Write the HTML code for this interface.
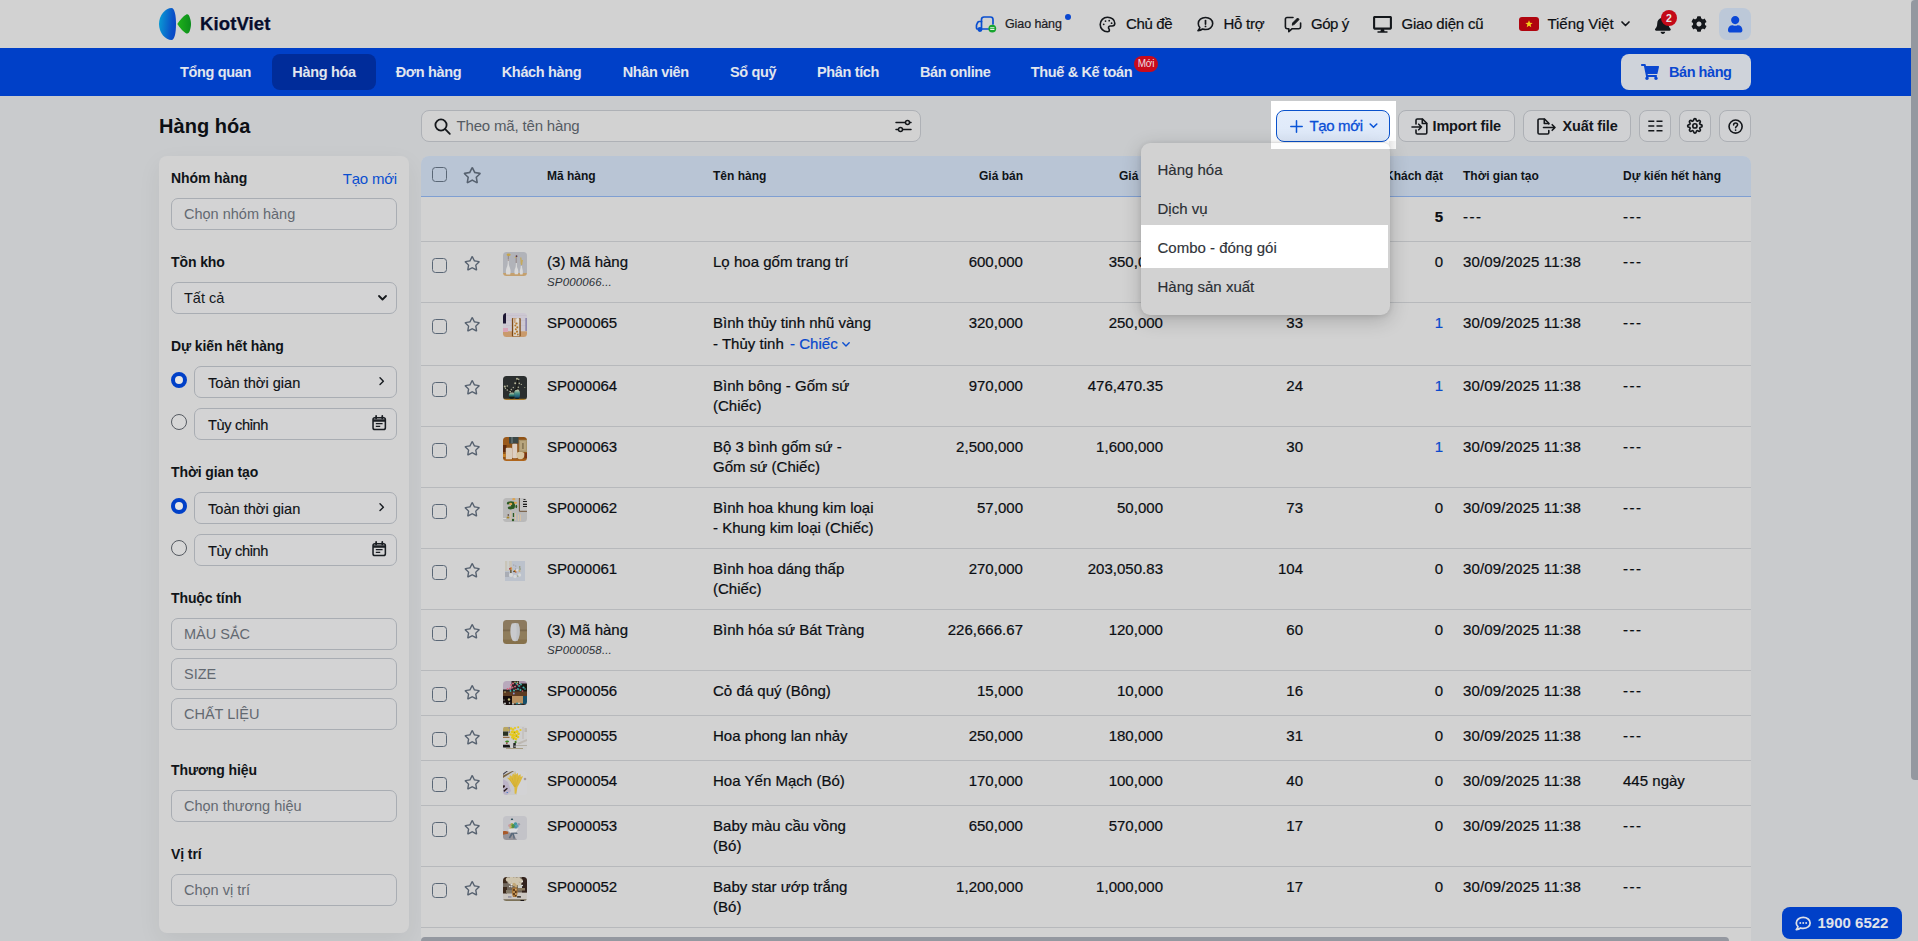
<!DOCTYPE html>
<html lang="vi">
<head>
<meta charset="utf-8">
<title>KiotViet - Hàng hóa</title>
<style>
*{box-sizing:border-box;margin:0;padding:0}
html,body{width:1918px;height:941px;overflow:hidden}
body{font-family:"Liberation Sans",sans-serif;font-size:15px;color:#101418;background:#c9cbcd;position:relative}
.a{position:absolute}
svg{display:block;overflow:visible}
#hdr{position:absolute;left:0;top:0;width:1911px;height:48px;background:#d2d2d2}
#nav{position:absolute;left:0;top:48px;width:1911px;height:48px;background:#0040c8}
#vscroll{position:absolute;left:1911px;top:0;width:7px;height:780px;background:#9498a0;border-radius:4px 0 0 4px}
.logo-t{position:absolute;left:200px;top:11px;font-weight:700;font-size:18.500px;line-height:26px;color:#070d2c;letter-spacing:.12px;-webkit-text-stroke:.25px #070d2c}
.hi{position:absolute;top:0;height:48px;line-height:48px;font-size:15px;color:#0d1014;-webkit-text-stroke:.2px;white-space:nowrap;letter-spacing:-0.2px}
.ni{position:absolute;top:54px;height:36px;line-height:36px;text-align:center;border-radius:8px;color:#e2e6ee;font-weight:700;font-size:14.5px;white-space:nowrap;letter-spacing:-0.35px}
.ni.act{background:#002c9a}
.btn{position:absolute;top:110px;height:32px;border:1px solid #adb0b5;border-radius:8px;background:#d0d1d3}
.btn span{position:absolute;top:0;line-height:30px;font-weight:700;font-size:14.5px;letter-spacing:-0.15px;white-space:nowrap;color:#14171b}
/* sidebar */
#side{position:absolute;left:159px;top:156px;width:250px;height:777px;background:#d2d2d2;border-radius:8px;box-shadow:0 8px 24px rgba(0,0,0,.06)}
.sl{position:absolute;left:12px;font-weight:700;font-size:14px;line-height:20px;color:#101418;white-space:nowrap;letter-spacing:-0.1px}
.inp{position:absolute;left:12px;width:226px;height:32px;border:1px solid #a9adb3;border-radius:7px;font-size:14.5px;line-height:30px;padding-left:12px;color:#636971;white-space:nowrap;background:#d3d3d4}
.inp.v{color:#15181c}
.rad{position:absolute;left:12px;width:16px;height:16px;border-radius:50%;border:1px solid #555a61;background:#d6d6d6}
.rad.on{border:4.5px solid #0040c8;background:#e6e6e6}
.rb{position:absolute;left:35px;width:203px;height:32px;border:1px solid #a9adb3;border-radius:7px;font-size:14.600px;line-height:32.400px;padding-left:13px;color:#0f1216;-webkit-text-stroke:.15px;white-space:nowrap;background:#d3d3d4}
/* table */
#tbl{position:absolute;left:421px;top:156px;width:1330px;height:785px;background:#d2d2d2;border-radius:8px 8px 0 0;overflow:hidden}
#th{position:absolute;left:0;top:0;width:1330px;height:41px;background:#b9c5d5;border-bottom:1px solid #7f9fd2}
.h{position:absolute;top:0;line-height:40px;font-weight:700;font-size:12px;color:#101418;white-space:nowrap}
.row{position:absolute;left:0;width:1330px;border-top:1px solid #b7b9bc}
.c{position:absolute;top:10px;line-height:20px;font-size:15px;color:#0b0e12;white-space:nowrap;-webkit-text-stroke:.22px #0b0e12;letter-spacing:.02px}
.r{text-align:right}
.cb{position:absolute;left:10.500px;width:15px;height:15px;border:1.500px solid #5a6776;border-radius:3.500px;background:transparent}
.th{position:absolute;left:82px;top:10px;width:24px;height:24px;border-radius:3.500px;overflow:hidden}
.sub{position:absolute;left:126px;top:33px;font-size:11.5px;line-height:14px;font-style:italic;color:#2c3136;letter-spacing:.15px}
.lnk{color:#0a49cc;-webkit-text-stroke-color:#0a49cc}
/* dropdown */
#dd{position:absolute;left:1140.500px;top:143px;width:249px;height:172px;border-radius:9px;background:#d2d2d2;box-shadow:0 5px 20px rgba(0,0,0,.20),0 1px 5px rgba(0,0,0,.10)}
.di{position:absolute;left:0;width:249px;height:39px;line-height:39px;padding-left:17px;font-size:15px;-webkit-text-stroke:.15px;color:#2a2e33;white-space:nowrap}
</style>
</head>
<body>
<svg width="0" height="0" style="position:absolute"><defs><filter id="tb" x="-5%" y="-5%" width="110%" height="110%"><feGaussianBlur stdDeviation=".38"/></filter></defs></svg>
<div id="hdr"></div>
<div id="nav"></div>
<div id="vscroll"></div>
<svg class="a" style="left:158px;top:7px" width="36" height="34" viewBox="0 0 36 34">
<defs><linearGradient id="lg1" x1="0" y1=".4" x2="1" y2=".6"><stop offset="0" stop-color="#0a9ad4"/><stop offset=".75" stop-color="#0a52c8"/><stop offset="1" stop-color="#0a46c4"/></linearGradient>
<linearGradient id="lg2" x1="0" y1=".5" x2="1" y2=".5"><stop offset="0" stop-color="#1fb31a"/><stop offset="1" stop-color="#0c8c1c"/></linearGradient></defs>
<path fill="url(#lg1)" d="M13.500 1 C16.500 1 18 8 18 17 C18 26 16.500 33 13.500 33 C7.500 33 1 26 1 17 C1 8 7.500 1 13.500 1Z"/>
<path fill="url(#lg2)" d="M19.300 17 C21.500 13.800 25.500 8.800 28.300 7.500 C30 6.800 31 8 31.800 10.500 C32.800 13.500 33 15.500 33 17 C33 18.800 32.700 21 31.800 23.800 C31 26.200 30 27 28.300 26.400 C25.500 25.200 21.500 20.200 19.300 17Z"/>
</svg>
<div class="logo-t">KiotViet</div>
<svg class="a" style="left:975px;top:15px" width="22" height="18" viewBox="0 0 22 18" fill="none" stroke="#0a4fd0" stroke-width="1.700" stroke-linecap="round" stroke-linejoin="round">
<path d="M6.500 13.500V4.500C6.500 3 7.500 2 9 2h6.500C17 2 18 3 18 4.500V9"/><path d="M6.500 6.500H4.200C3.500 6.500 3 6.900 2.700 7.500L1.500 10v3c0 .6.400 1 1 1h1"/><path d="M7.500 14h6"/>
<circle cx="5" cy="14.500" r="1.600" fill="#0a4fd0"/>
<circle cx="17.300" cy="13.600" r="3.900" fill="#16a52e" stroke="none"/><path d="M15.600 12.800h3.400M15.600 14.500h3.400" stroke="#e8f4ea" stroke-width="1.100"/>
</svg>
<div class="hi" style="left:1005px;font-size:12.5px;letter-spacing:-0.1px;color:#1c2024">Giao hàng</div>
<div class="a" style="left:1065px;top:14px;width:6px;height:6px;border-radius:50%;background:#0a47d0"></div>
<svg class="a" style="left:1099px;top:16px" width="17" height="17" viewBox="0 0 17 17" fill="none" stroke="#14171b" stroke-width="1.600" stroke-linecap="round" stroke-linejoin="round">
<path d="M8.500 1.200C4.400 1.200 1.200 4.400 1.200 8.500s3.200 7.300 7.300 7.300c1.300 0 1.900-.8 1.900-1.700 0-.5-.2-.9-.5-1.300-.3-.3-.4-.7-.4-1.100 0-1 .8-1.700 1.700-1.700h1.900c1.500 0 2.700-1.200 2.700-2.700 0-3.500-3.300-6.100-7.300-6.100z"/>
<circle cx="4.700" cy="8.300" r=".9" fill="#14171b" stroke="none"/><circle cx="6.500" cy="5.100" r=".9" fill="#14171b" stroke="none"/><circle cx="10.200" cy="4.700" r=".9" fill="#14171b" stroke="none"/><circle cx="12.600" cy="7.200" r=".9" fill="#14171b" stroke="none"/>
</svg>
<div class="hi" style="left:1126px;letter-spacing:-0.35px">Chủ đề</div>
<svg class="a" style="left:1196px;top:16px" width="18" height="17" viewBox="0 0 18 17" fill="none" stroke="#14171b" stroke-width="1.600" stroke-linecap="round" stroke-linejoin="round">
<path d="M9.500 1.500c4 0 7.200 2.600 7.200 6s-3.200 6-7.200 6c-1 0-2-.2-2.900-.5-1.200.9-2.700 1.600-4.600 1.700 1-.9 1.600-2 1.800-3.200C2.900 10.500 2.300 9.100 2.300 7.500c0-3.400 3.200-6 7.200-6z"/>
<path d="M9.500 4.600v3.500" stroke-width="1.700"/><circle cx="9.500" cy="10.400" r=".95" fill="#14171b" stroke="none"/>
</svg>
<div class="hi" style="left:1223.5px;letter-spacing:-0.25px">Hỗ trợ</div>
<svg class="a" style="left:1284px;top:16px" width="18" height="17" viewBox="0 0 18 17" fill="none" stroke="#14171b" stroke-width="1.600" stroke-linecap="round" stroke-linejoin="round">
<path d="M9 1.500H3c-.9 0-1.600.7-1.600 1.600v8c0 .9.700 1.600 1.600 1.600h1.800v3l3.400-3H15c.9 0 1.600-.7 1.600-1.600V7"/>
<path d="M8.300 8.800l.5-2 4.800-4.800 1.500 1.500-4.800 4.800z" fill="#14171b" stroke-width="1"/>
</svg>
<div class="hi" style="left:1311px;letter-spacing:-0.45px">Góp ý</div>
<svg class="a" style="left:1373px;top:16px" width="19" height="16.800" viewBox="0 0 576 512"><path fill="#14171b" d="M528 0H48C21.500 0 0 21.500 0 48v320c0 26.500 21.500 48 48 48h192l-16 48h-72c-13.300 0-24 10.700-24 24s10.700 24 24 24h272c13.300 0 24-10.700 24-24s-10.700-24-24-24h-72l-16-48h192c26.500 0 48-21.500 48-48V48c0-26.500-21.500-48-48-48zm-16 352H64V64h448v288z"/></svg>
<div class="hi" style="left:1401.5px;letter-spacing:-0.2px">Giao diện cũ</div>
<svg class="a" style="left:1519px;top:17px" width="20" height="14" viewBox="0 0 20 14"><rect width="20" height="14" rx="3" fill="#b0050f"/><path fill="#f2d21b" d="M10 3.200l1 2.500 2.700.2-2.100 1.700.7 2.600L10 8.800 7.700 10.200l.7-2.600L6.300 5.900 9 5.700z"/></svg>
<div class="hi" style="left:1547.5px;letter-spacing:-0.05px">Tiếng Việt</div>
<svg class="a" style="left:1620.500px;top:20.500px" width="9" height="6" viewBox="0 0 9 6" fill="none" stroke="#14171b" stroke-width="1.700" stroke-linecap="round" stroke-linejoin="round"><path d="M1 1l3.500 3.500L8 1"/></svg>
<svg class="a" style="left:1654.500px;top:15.500px" width="15.750" height="18" viewBox="0 0 448 512"><path fill="#14171b" d="M224 512c35.320 0 63.970-28.650 63.970-64H160.030c0 35.350 28.650 64 63.970 64zm215.390-149.710c-19.320-20.760-55.470-51.990-55.470-154.290 0-77.700-54.480-139.900-127.940-155.160V32c0-17.670-14.320-32-31.980-32s-31.980 14.330-31.980 32v20.840C118.560 68.100 64.080 130.300 64.080 208c0 102.300-36.150 133.530-55.470 154.290-6 6.450-8.660 14.160-8.610 21.710.110 16.400 12.980 32 32.100 32h383.800c19.120 0 32-15.600 32.100-32 .050-7.550-2.610-15.270-8.610-21.710z"/></svg>
<div class="a" style="left:1661px;top:9.500px;width:16px;height:16px;border-radius:50%;background:#c40a18;color:#e8e8e8;font-size:10.500px;font-weight:700;line-height:16px;text-align:center">2</div>
<svg class="a" style="left:1691px;top:16px" width="16" height="16" viewBox="0 0 512 512"><path fill="#14171b" d="M487.4 315.7l-42.6-24.6c4.3-23.2 4.3-47 0-70.2l42.6-24.6c4.9-2.8 7.1-8.6 5.5-14-11.1-35.6-30-67.8-54.7-94.6-3.8-4.1-10-5.1-14.8-2.3L380.8 110c-17.9-15.4-38.5-27.3-60.8-35.1V25.800c0-5.600-3.900-10.500-9.400-11.700-36.700-8.200-74.300-7.800-109.200 0-5.500 1.200-9.400 6.100-9.400 11.700V75c-22.200 7.900-42.800 19.800-60.800 35.100L88.700 85.500c-4.900-2.800-11-1.900-14.800 2.300-24.700 26.700-43.600 58.900-54.700 94.600-1.700 5.400.600 11.200 5.500 14L67.300 221c-4.300 23.200-4.300 47 0 70.200l-42.600 24.600c-4.900 2.800-7.100 8.600-5.500 14 11.100 35.600 30 67.800 54.700 94.600 3.800 4.100 10 5.100 14.800 2.300l42.600-24.600c17.900 15.400 38.500 27.300 60.800 35.100v49.200c0 5.600 3.900 10.500 9.400 11.700 36.700 8.200 74.300 7.800 109.200 0 5.500-1.200 9.400-6.100 9.400-11.700v-49.200c22.200-7.900 42.800-19.800 60.800-35.100l42.600 24.600c4.900 2.800 11 1.900 14.800-2.300 24.700-26.700 43.600-58.900 54.700-94.600 1.500-5.500-.700-11.300-5.600-14.100zM256 336c-44.100 0-80-35.900-80-80s35.900-80 80-80 80 35.900 80 80-35.900 80-80 80z"/></svg>
<div class="a" style="left:1719px;top:8px;width:32px;height:32px;border-radius:8px;background:#bcc8d8"></div><svg class="a" style="left:1727.800px;top:15.700px" width="14.400" height="16.400" viewBox="0 0 448 512"><path fill="#0a47d6" d="M224 256c70.700 0 128-57.300 128-128S294.700 0 224 0 96 57.300 96 128s57.300 128 128 128zm89.600 32h-16.700c-22.200 10.200-46.900 16-72.900 16s-50.600-5.800-72.900-16h-16.700C60.200 288 0 348.200 0 422.400V464c0 26.500 21.500 48 48 48h352c26.500 0 48-21.500 48-48v-41.600c0-74.200-60.200-134.400-134.400-134.400z"/></svg>
<div class="ni" style="left:159.5px;width:112px">Tổng quan</div>
<div class="ni act" style="left:272px;width:104px">Hàng hóa</div>
<div class="ni" style="left:376px;width:105px">Đơn hàng</div>
<div class="ni" style="left:481px;width:121px">Khách hàng</div>
<div class="ni" style="left:601.5px;width:108.5px">Nhân viên</div>
<div class="ni" style="left:709px;width:88px">Sổ quỹ</div>
<div class="ni" style="left:796px;width:104px">Phân tích</div>
<div class="ni" style="left:899.5px;width:111.5px">Bán online</div>
<div class="ni" style="left:1010px;width:143px">Thuế &amp; Kế toán</div>
<div class="a" style="left:1134px;top:55.500px;width:24px;height:16px;border-radius:8px;background:#c80a1c;color:#ecdfe0;font-size:10px;line-height:16px;text-align:center;letter-spacing:-0.2px">Mới</div>
<div class="a" style="left:1620.500px;top:54px;width:130.500px;height:36px;border-radius:8px;background:#cfd3da"></div><svg class="a" style="left:1641px;top:64px" width="18" height="16" viewBox="0 0 576 512"><path fill="#0a47d0" d="M528.120 301.319l47.273-208C578.806 78.301 567.391 64 551.990 64H159.208l-9.166-44.810C147.758 8.021 137.930 0 126.529 0H24C10.745 0 0 10.745 0 24v16c0 13.255 10.745 24 24 24h69.883l70.248 343.435C147.325 417.100 136 435.222 136 456c0 30.928 25.072 56 56 56s56-25.072 56-56c0-15.674-6.447-29.835-16.824-40h209.647C430.447 426.165 424 440.326 424 456c0 30.928 25.072 56 56 56s56-25.072 56-56c0-22.172-12.888-41.332-31.579-50.405l5.517-24.276c3.413-15.018-8.002-29.319-23.403-29.319H218.117l-6.545-32h293.145c11.206 0 20.920-7.754 23.403-18.681z"/></svg><div class="a" style="left:1669px;top:54px;line-height:36px;font-weight:700;font-size:14.500px;letter-spacing:-0.45px;color:#0a47d0;white-space:nowrap">Bán hàng</div>
<div class="a" style="left:159px;top:112px;font-weight:700;font-size:20px;line-height:28px;color:#0c0f13;white-space:nowrap;letter-spacing:0.05px">Hàng hóa</div>
<div class="a" style="left:421px;top:110px;width:500px;height:32px;border:1px solid #aeb1b6;border-radius:8px;background:#d2d2d2"></div>
<svg class="a" style="left:433.500px;top:117.500px" width="17" height="17" viewBox="0 0 17 17" fill="none" stroke="#14171b" stroke-width="1.800" stroke-linecap="round"><circle cx="7" cy="7" r="5.600"/><path d="M11.200 11.200L15.800 15.800"/></svg>
<div class="a" style="left:456.500px;top:110px;line-height:32px;font-size:15px;letter-spacing:-0.17px;color:#555b63;white-space:nowrap">Theo mã, tên hàng</div>
<svg class="a" style="left:894.500px;top:118px" width="17" height="16" viewBox="0 0 17 16" fill="none" stroke="#14171b" stroke-width="1.500" stroke-linecap="round"><path d="M1 4.500h9.500M14.500 4.500H16M1 11.500h2.500M7.500 11.500H16"/><circle cx="12.500" cy="4.500" r="2" fill="#d2d2d2"/><circle cx="5.500" cy="11.500" r="2" fill="#d2d2d2"/></svg>
<div class="btn" style="left:1398px;width:116.500px"><span style="left:33.500px">Import file</span></div>
<svg class="a" style="left:1410.500px;top:117.500px" width="17" height="17" viewBox="0 0 17 17" fill="none" stroke="#14171b" stroke-width="1.600" stroke-linecap="round" stroke-linejoin="round">
<path d="M5 6V2.300c0-.7.600-1.300 1.300-1.300h5.200L15.800 5.300v9.400c0 .7-.6 1.300-1.300 1.300H6.300c-.7 0-1.300-.6-1.300-1.300V12"/><path d="M11.300 1.200v4.300h4.300"/><path d="M1 9h9.500M7.700 6.200L10.500 9l-2.800 2.800"/></svg>
<div class="btn" style="left:1523px;width:107.500px"><span style="left:38.500px">Xuất file</span></div>
<svg class="a" style="left:1536.500px;top:117.500px" width="19" height="17" viewBox="0 0 19 17" fill="none" stroke="#14171b" stroke-width="1.600" stroke-linecap="round" stroke-linejoin="round">
<path d="M11.800 12.500v2.200c0 .7-.6 1.300-1.300 1.300H2.300c-.7 0-1.300-.6-1.300-1.300V2.300C1 1.600 1.600 1 2.300 1h5.200l4.300 4.300V6"/><path d="M7.300 1.200v4.300h4.300"/><path d="M6.500 9.500H18M15.200 6.700L18 9.500l-2.800 2.800"/></svg>
<div class="btn" style="left:1639px;width:32px"></div><div class="btn" style="left:1679px;width:32px"></div><div class="btn" style="left:1719px;width:32px"></div>
<svg class="a" style="left:1647.500px;top:120px" width="15" height="12" viewBox="0 0 15 12" fill="none" stroke="#14171b" stroke-width="1.500"><path d="M.3 1.200h6M8.500 1.200h6M.3 6h6M8.500 6h6M.3 10.800h6M8.500 10.800h6"/></svg>
<svg class="a" style="left:1687.200px;top:118px" width="15.800" height="15.800" viewBox="0 0 24 24" fill="none" stroke="#14171b" stroke-width="2.500" stroke-linecap="round" stroke-linejoin="round"><circle cx="12" cy="12" r="3.200"/><path d="M19.400 15a1.650 1.650 0 0 0 .33 1.820l.06.06a2 2 0 0 1 0 2.830 2 2 0 0 1-2.830 0l-.06-.06a1.650 1.650 0 0 0-1.820-.33 1.650 1.650 0 0 0-1 1.510V21a2 2 0 0 1-2 2 2 2 0 0 1-2-2v-.09A1.650 1.650 0 0 0 9 19.400a1.650 1.650 0 0 0-1.820.33l-.06.06a2 2 0 0 1-2.830 0 2 2 0 0 1 0-2.830l.06-.06a1.650 1.650 0 0 0 .33-1.820 1.650 1.650 0 0 0-1.510-1H3a2 2 0 0 1-2-2 2 2 0 0 1 2-2h.09A1.650 1.650 0 0 0 4.600 9a1.650 1.650 0 0 0-.33-1.820l-.06-.06a2 2 0 0 1 0-2.830 2 2 0 0 1 2.830 0l.06.06a1.650 1.650 0 0 0 1.820.33H9a1.650 1.650 0 0 0 1-1.510V3a2 2 0 0 1 2-2 2 2 0 0 1 2 2v.09a1.650 1.650 0 0 0 1 1.510 1.650 1.650 0 0 0 1.820-.33l.06-.06a2 2 0 0 1 2.830 0 2 2 0 0 1 0 2.830l-.06.06a1.650 1.650 0 0 0-.33 1.820V9a1.650 1.650 0 0 0 1.510 1H21a2 2 0 0 1 2 2 2 2 0 0 1-2 2h-.09a1.650 1.650 0 0 0-1.510 1z"/></svg>
<svg class="a" style="left:1727.500px;top:118.500px" width="15.200" height="15.200" viewBox="0 0 16 16" fill="none" stroke="#14171b" stroke-width="1.700" stroke-linecap="round" stroke-linejoin="round"><circle cx="8" cy="8" r="6.900"/><path d="M5.900 6.200c0-1.200 1-2 2.100-2s2.100.8 2.100 1.900c0 1.500-2.100 1.700-2.100 3.100" stroke-width="1.600"/><circle cx="8" cy="11.700" r=".9" fill="#14171b" stroke="none"/></svg>
<div id="side">
<div class="sl" style="top:12px">Nhóm hàng</div>
<div class="a" style="right:12px;top:13px;font-size:15px;line-height:20px;color:#0b4fd0;letter-spacing:-0.2px;white-space:nowrap">Tạo mới</div>
<div class="inp" style="top:42px">Chọn nhóm hàng</div>
<div class="sl" style="top:96px">Tồn kho</div>
<div class="inp v" style="top:126px">Tất cả</div>
<svg class="a" style="left:219px;top:138.500px" width="9" height="6" viewBox="0 0 9 6" fill="none" stroke="#14171b" stroke-width="1.800" stroke-linecap="round" stroke-linejoin="round"><path d="M1 1l3.500 3.500L8 1"/></svg>
<div class="sl" style="top:180px">Dự kiến hết hàng</div>
<div class="rad on" style="top:216px"></div><div class="rb" style="top:210px">Toàn thời gian</div>
<svg class="a" style="left:220.3px;top:221.2px" width="5.400" height="8.400" viewBox="0 0 6 10" fill="none" stroke="#1a1e23" stroke-width="1.700" stroke-linecap="round" stroke-linejoin="round"><path d="M1 1l4 4-4 4"/></svg>
<div class="rad" style="top:258px"></div><div class="rb" style="top:252px;letter-spacing:-.35px">Tùy chỉnh</div>
<svg class="a" style="left:212.8px;top:259.2px" width="14.400" height="15.600" viewBox="0 0 14 15" fill="none" stroke="#1a1e23" stroke-width="1.500" stroke-linejoin="round"><rect x="1" y="2.500" width="12" height="11.500" rx="1.800"/><path d="M1 5.300h12" stroke-width="2.400"/><path d="M4 .8v2.500M10 .8v2.500" stroke-linecap="round" stroke-width="1.700"/><path d="M3.700 8.300h6.600M3.700 11h4.300" stroke-width="1.300"/></svg>
<div class="sl" style="top:306px">Thời gian tạo</div>
<div class="rad on" style="top:342px"></div><div class="rb" style="top:336px">Toàn thời gian</div>
<svg class="a" style="left:220.3px;top:347.2px" width="5.400" height="8.400" viewBox="0 0 6 10" fill="none" stroke="#1a1e23" stroke-width="1.700" stroke-linecap="round" stroke-linejoin="round"><path d="M1 1l4 4-4 4"/></svg>
<div class="rad" style="top:384px"></div><div class="rb" style="top:378px;letter-spacing:-.35px">Tùy chỉnh</div>
<svg class="a" style="left:212.8px;top:385.2px" width="14.400" height="15.600" viewBox="0 0 14 15" fill="none" stroke="#1a1e23" stroke-width="1.500" stroke-linejoin="round"><rect x="1" y="2.500" width="12" height="11.500" rx="1.800"/><path d="M1 5.300h12" stroke-width="2.400"/><path d="M4 .8v2.500M10 .8v2.500" stroke-linecap="round" stroke-width="1.700"/><path d="M3.700 8.300h6.600M3.700 11h4.300" stroke-width="1.300"/></svg>
<div class="sl" style="top:432px">Thuộc tính</div>
<div class="inp" style="top:462px">MÀU SẮC</div>
<div class="inp" style="top:502px">SIZE</div>
<div class="inp" style="top:542px">CHẤT LIỆU</div>
<div class="sl" style="top:604px">Thương hiệu</div>
<div class="inp" style="top:634px">Chọn thương hiệu</div>
<div class="sl" style="top:688px">Vị trí</div>
<div class="inp" style="top:718px">Chọn vị trí</div>
</div>
<div id="tbl">
<div id="th">
<div class="cb" style="top:10.500px"></div><svg class="a" style="left:42px;top:10.5px" width="18.5" height="16.44" viewBox="0 0 576 512"><path fill="#56616f" d="M528.100 171.500L382 150.200 316.700 17.800c-11.700-23.600-45.600-23.900-57.400 0L194 150.200 47.900 171.500c-26.200 3.800-36.700 36.100-17.700 54.600l105.700 103-25 145.500c-4.500 26.300 23.200 46 46.400 33.700L288 439.600l130.700 68.700c23.200 12.200 50.900-7.400 46.400-33.700l-25-145.500 105.700-103c19-18.500 8.500-50.800-17.700-54.600zM388.600 312.300l23.700 138.400L288 385.400l-124.300 65.300 23.700-138.400-100.600-98 139-20.200 62.200-126 62.200 126 139 20.200-100.600 98z"/></svg><div class="h" style="left:126px">Mã hàng</div><div class="h" style="left:292px">Tên hàng</div><div class="h" style="left:1042px">Thời gian tạo</div><div class="h" style="left:1202px">Dự kiến hết hàng</div><div class="h r" style="right:728px">Giá bán</div><div class="h r" style="right:588px">Giá vốn</div><div class="h r" style="right:448px">Tồn kho</div><div class="h r" style="right:308px">Khách đặt</div>
</div>
<div class="row" style="top:41px;height:44px;border-top:none"><div class="c r" style="right:448px;font-weight:700">445</div><div class="c r" style="right:308px;font-weight:700">5</div><div class="c" style="left:1042px;letter-spacing:1.500px">---</div><div class="c" style="left:1202px;letter-spacing:1.500px">---</div></div>
<div class="row" style="top:85px;height:61px"><div class="cb" style="top:15.500px"></div><svg class="a" style="left:42.8px;top:13.6px" width="16.4" height="14.58" viewBox="0 0 576 512"><path fill="#56616f" d="M528.100 171.500L382 150.200 316.700 17.800c-11.700-23.600-45.600-23.900-57.400 0L194 150.200 47.900 171.500c-26.200 3.800-36.700 36.100-17.700 54.600l105.700 103-25 145.500c-4.500 26.300 23.200 46 46.400 33.700L288 439.600l130.700 68.700c23.200 12.200 50.900-7.400 46.400-33.700l-25-145.500 105.700-103c19-18.500 8.500-50.800-17.700-54.600zM388.600 312.300l23.700 138.400L288 385.400l-124.300 65.300 23.700-138.400-100.600-98 139-20.200 62.200-126 62.200 126 139 20.200-100.600 98z"/></svg><svg class="th" viewBox="0 0 24 24" width="24" height="24"><g filter="url(#tb)"><rect width="24" height="24" fill="#b1b3b9"/><rect y="21" width="24" height="3" fill="#c4a06e"/><path fill="#d9d9d9" d="M3.300 22.600c-.9-3.200-.2-6.200.9-8.400.5-1.200.6-3.800.6-7.200h.9c0 3.400.1 6 .6 7.200 1.100 2.200 1.800 5.200.9 8.400zM11.800 22.300c-.8-2.600-.3-4.900.6-6.600.4-.9.500-2.400.5-4.700h.9c0 2.300.1 3.800.5 4.700.9 1.700 1.400 4 .6 6.600zM17.100 22.600c-.5-2-.3-4.600.3-6.200.3-.8.300-1.600.3-2.400h1.300c0 .8 0 1.600.3 2.400.6 1.600.8 4.200.3 6.200z"/><ellipse cx="5.600" cy="2.800" rx="2" ry="1.300" fill="#c5a448"/><path stroke="#7a5c54" stroke-width=".5" fill="none" d="M5.300 4v5M13.200 5v6"/><circle cx="13.500" cy="4.200" r=".9" fill="#5e3a44"/><circle cx="12.400" cy="5.400" r=".7" fill="#c9b060"/><path stroke="#c5a95c" stroke-width="1.200" fill="none" d="M17.600 5.500c.8 2 .2 3.500.8 7M19.500 8c-.6 1.500-.8 3-.9 5"/></g></svg><div class="c" style="left:126px">(3) Mã hàng</div><div class="sub">SP000066...</div><div class="c" style="left:292px;top:10px">Lọ hoa gốm trang trí</div><div class="c r" style="right:728px">600,000</div><div class="c r" style="right:588px">350,000</div><div class="c r" style="right:448px">11</div><div class="c r" style="right:308px">0</div><div class="c" style="left:1042px;letter-spacing:.14px">30/09/2025 11:38</div><div class="c" style="left:1202px;letter-spacing:1.500px">---</div></div>
<div class="row" style="top:146px;height:63px"><div class="cb" style="top:15.500px"></div><svg class="a" style="left:42.8px;top:13.6px" width="16.4" height="14.58" viewBox="0 0 576 512"><path fill="#56616f" d="M528.100 171.500L382 150.200 316.700 17.800c-11.700-23.600-45.600-23.900-57.400 0L194 150.200 47.900 171.500c-26.200 3.800-36.700 36.100-17.700 54.600l105.700 103-25 145.500c-4.500 26.300 23.200 46 46.400 33.700L288 439.600l130.700 68.700c23.200 12.200 50.900-7.400 46.400-33.700l-25-145.500 105.700-103c19-18.500 8.500-50.800-17.700-54.600zM388.600 312.300l23.700 138.400L288 385.400l-124.300 65.300 23.700-138.400-100.600-98 139-20.200 62.200-126 62.200 126 139 20.200-100.600 98z"/></svg><svg class="th" viewBox="0 0 24 24" width="24" height="24"><g filter="url(#tb)"><rect width="24" height="24" fill="#cdc8d2"/><rect x="0" y="0" width="3" height="10.500" fill="#1c1632"/><rect x="3" y="2" width="21" height=".4" fill="#bdb8c4"/><rect x="3" y="7" width="21" height=".4" fill="#bdb8c4"/><rect x="3" y="12" width="21" height=".4" fill="#bdb8c4"/><rect x="22.300" y="5" width="1.700" height="13" fill="#8d88ae"/><rect y="18.300" width="24" height="5.700" fill="#c99a6c"/><rect x="0" y="15" width="5" height="4" fill="#d9a4b8"/><rect x="8.900" y="5" width="8.800" height="18.600" rx=".8" fill="#7e4a14"/><rect x="10.200" y="5.200" width="6.200" height="18" fill="#ddd6cc"/><g fill="#b5772a"><circle cx="13.500" cy="10.500" r="1.100"/><circle cx="12.300" cy="12.400" r="1"/><circle cx="14.300" cy="14.300" r="1.100"/><circle cx="12.800" cy="16.300" r="1"/><circle cx="14" cy="18.700" r="1.100"/><circle cx="12" cy="20.500" r="1"/><circle cx="14.800" cy="21.500" r=".9"/></g><rect x="11.200" y="5" width="1.300" height="5" fill="#c9986a"/><rect x="14.300" y="5" width="1.200" height="4" fill="#e9e4dc"/></g></svg><div class="c" style="left:126px">SP000065</div><div class="c" style="left:292px;top:10px">Bình thủy tinh nhũ vàng</div><div class="c" style="left:292px;top:31px">- Thủy tinh <span class="lnk" style="margin-left:2px">- Chiếc</span></div><svg class="a" style="left:420.500px;top:38.500px" width="8" height="5" viewBox="0 0 8 5" fill="none" stroke="#0b4fd0" stroke-width="1.400" stroke-linecap="round" stroke-linejoin="round"><path d="M.8.800L4 4 7.200.8"/></svg><div class="c r" style="right:728px">320,000</div><div class="c r" style="right:588px">250,000</div><div class="c r" style="right:448px">33</div><div class="c r lnk" style="right:308px">1</div><div class="c" style="left:1042px;letter-spacing:.14px">30/09/2025 11:38</div><div class="c" style="left:1202px;letter-spacing:1.500px">---</div></div>
<div class="row" style="top:209px;height:61px"><div class="cb" style="top:15.500px"></div><svg class="a" style="left:42.8px;top:13.6px" width="16.4" height="14.58" viewBox="0 0 576 512"><path fill="#56616f" d="M528.100 171.500L382 150.200 316.700 17.800c-11.700-23.600-45.600-23.900-57.400 0L194 150.200 47.900 171.500c-26.200 3.800-36.700 36.100-17.700 54.600l105.700 103-25 145.500c-4.500 26.300 23.200 46 46.400 33.700L288 439.600l130.700 68.700c23.200 12.200 50.900-7.400 46.400-33.700l-25-145.500 105.700-103c19-18.500 8.500-50.800-17.700-54.600zM388.600 312.300l23.700 138.400L288 385.400l-124.300 65.300 23.700-138.400-100.600-98 139-20.200 62.200-126 62.200 126 139 20.200-100.600 98z"/></svg><svg class="th" viewBox="0 0 24 24" width="24" height="24"><g filter="url(#tb)"><rect width="24" height="24" fill="#2a2e2e"/><rect y="22.800" width="24" height="1.200" fill="#a87a2a"/><defs><linearGradient id="v3a" x1="0" y1="0" x2="0" y2="1"><stop offset="0" stop-color="#c9c9a8"/><stop offset=".45" stop-color="#2f8076"/><stop offset=".8" stop-color="#0c1c1c"/></linearGradient><linearGradient id="v3b" x1="0" y1="0" x2="0" y2="1"><stop offset="0" stop-color="#cfcfae"/><stop offset=".4" stop-color="#4a9488"/><stop offset=".75" stop-color="#1f5c78"/><stop offset="1" stop-color="#0a1418"/></linearGradient></defs><path fill="url(#v3a)" d="M7.500 16.400h2.600c1.400 1 1.900 2.300 1.500 4.200-.3 1.300-1 2-2 2.200H8c-1-.2-1.700-.9-2-2.200-.4-1.900.1-3.200 1.500-4.200z"/><path fill="url(#v3b)" d="M12.900 13.400h2.400c1.200.9 1.700 2.300 1.700 4.700s-.5 3.900-1.500 4.900h-2.800c-1-1-1.500-2.500-1.500-4.900s.5-3.800 1.700-4.700z"/><path stroke="#15140f" stroke-width=".9" fill="none" d="M13.800 13.300c0-3.500.3-6.500.8-9.500M8.800 16.300c-1.300-2.400-3.500-3.800-6.500-5M10 15.500c1-1.300 2.300-2 4-2.500"/><g fill="#b5b598"><circle cx="14" cy="2.800" r="1"/><circle cx="15.700" cy="3.200" r=".8"/><circle cx="12.200" cy="7.300" r="1"/><circle cx="16.300" cy="7.400" r=".8"/><circle cx="18.300" cy="8.400" r=".6"/><circle cx="1.800" cy="10.500" r="1"/><circle cx="4.300" cy="10" r=".8"/><circle cx="2.500" cy="12.300" r=".7"/><circle cx="4.300" cy="14" r=".8"/><circle cx="7.200" cy="15.500" r=".8"/><circle cx="10.300" cy="11.500" r=".7"/><circle cx="15.300" cy="11.300" r=".8"/><circle cx="8.300" cy="13.500" r=".7"/><circle cx="21.800" cy="11.400" r=".5"/></g></g></svg><div class="c" style="left:126px">SP000064</div><div class="c" style="left:292px;top:10px">Bình bông - Gốm sứ</div><div class="c" style="left:292px;top:30px">(Chiếc)</div><div class="c r" style="right:728px">970,000</div><div class="c r" style="right:588px">476,470.35</div><div class="c r" style="right:448px">24</div><div class="c r lnk" style="right:308px">1</div><div class="c" style="left:1042px;letter-spacing:.14px">30/09/2025 11:38</div><div class="c" style="left:1202px;letter-spacing:1.500px">---</div></div>
<div class="row" style="top:270px;height:61px"><div class="cb" style="top:15.500px"></div><svg class="a" style="left:42.8px;top:13.6px" width="16.4" height="14.58" viewBox="0 0 576 512"><path fill="#56616f" d="M528.100 171.500L382 150.200 316.700 17.800c-11.700-23.600-45.600-23.900-57.400 0L194 150.200 47.900 171.500c-26.200 3.800-36.700 36.100-17.700 54.600l105.700 103-25 145.500c-4.500 26.300 23.200 46 46.400 33.700L288 439.600l130.700 68.700c23.200 12.200 50.900-7.400 46.400-33.700l-25-145.500 105.700-103c19-18.500 8.500-50.800-17.700-54.600zM388.600 312.300l23.700 138.400L288 385.400l-124.300 65.300 23.700-138.400-100.600-98 139-20.200 62.200-126 62.200 126 139 20.200-100.600 98z"/></svg><svg class="th" viewBox="0 0 24 24" width="24" height="24"><g filter="url(#tb)"><rect width="24" height="24" fill="#8f5218"/><rect x="0" y="0" width="6" height="8" fill="#9a5a1c"/><rect x="6" y="0" width="9.500" height="6.500" fill="#3a4646"/><rect x="8" y="0" width="2" height="6.500" fill="#58686a"/><rect x="15.800" y="2.800" width="8.200" height="12.200" fill="#a8946a"/><rect x="17" y="4" width="5.800" height="9.500" fill="#b8a67e"/><rect x="19" y="6" width="1.800" height="6" fill="#8a7a58"/><rect x="0" y="8" width="3.500" height="7" fill="#5e2c10"/><rect x="2.800" y="10.800" width="6.200" height="12" rx="1" fill="#d9cbbb"/><rect x="9.200" y="6.800" width="5" height="14.500" rx="1" fill="#dccfc4"/><path fill="#d7c4a0" d="M13.200 17c0-1.300 1.800-1.900 4.200-1.900s4.200.6 4.200 1.900c0 3.200-1.800 5.500-4.200 5.500s-4.200-2.300-4.200-5.500z"/><rect y="22.300" width="24" height="1.700" fill="#b0661e"/><rect x="21.500" y="16" width="2.500" height="5" fill="#7a3418"/><rect x="0" y="17" width="2.800" height="3" fill="#c7822a"/></g></svg><div class="c" style="left:126px">SP000063</div><div class="c" style="left:292px;top:10px">Bộ 3 bình gốm sứ -</div><div class="c" style="left:292px;top:30px">Gốm sứ (Chiếc)</div><div class="c r" style="right:728px">2,500,000</div><div class="c r" style="right:588px">1,600,000</div><div class="c r" style="right:448px">30</div><div class="c r lnk" style="right:308px">1</div><div class="c" style="left:1042px;letter-spacing:.14px">30/09/2025 11:38</div><div class="c" style="left:1202px;letter-spacing:1.500px">---</div></div>
<div class="row" style="top:331px;height:61px"><div class="cb" style="top:15.500px"></div><svg class="a" style="left:42.8px;top:13.6px" width="16.4" height="14.58" viewBox="0 0 576 512"><path fill="#56616f" d="M528.100 171.500L382 150.200 316.700 17.800c-11.700-23.600-45.600-23.900-57.400 0L194 150.200 47.900 171.500c-26.200 3.800-36.700 36.100-17.700 54.600l105.700 103-25 145.500c-4.500 26.300 23.200 46 46.400 33.700L288 439.600l130.700 68.700c23.200 12.200 50.900-7.400 46.400-33.700l-25-145.500 105.700-103c19-18.500 8.500-50.800-17.700-54.600zM388.600 312.300l23.700 138.400L288 385.400l-124.300 65.300 23.700-138.400-100.600-98 139-20.200 62.200-126 62.200 126 139 20.200-100.600 98z"/></svg><svg class="th" viewBox="0 0 24 24" width="24" height="24"><g filter="url(#tb)"><rect width="24" height="24" fill="#b9b9b9"/><rect x="16.800" y="0" width="7.200" height="13" fill="#c3c3c3"/><path fill="none" stroke="#6e5236" stroke-width="1" d="M16.400 0v13.300H24"/><g fill="#1c1c1c"><rect x="20.500" y="1" width="2" height=".9"/><rect x="20" y="3" width="4" height="1"/><rect x="20" y="5.700" width="4" height="1.300"/><rect x="20" y="8" width="4" height="1"/></g><g fill="#2c5a24"><ellipse cx="8" cy="4.800" rx="3.800" ry="1.500"/><ellipse cx="10" cy="7.500" rx="2" ry="3.500"/><ellipse cx="7.500" cy="9.800" rx="2.800" ry="1.600"/><ellipse cx="13.300" cy="8.500" rx=".9" ry="1.700"/><ellipse cx="5" cy="5.500" rx="1.200" ry="1"/><rect x="9.800" y="15" width="1.300" height="4" /><circle cx="10" cy="22" r="1.200"/></g><g fill="#dca452"><ellipse cx="10.800" cy="1.200" rx="1.600" ry="1.100"/><ellipse cx="7.700" cy="6" rx="1.600" ry="1.200"/><ellipse cx="12.500" cy="4.800" rx="1.700" ry="1.100"/></g><g fill="#d9c2a4"><rect x="7.300" y="13" width="1" height="9"/><rect x="12" y="15" width="1" height="7"/><rect x="15" y="16.500" width=".9" height="6.500"/><rect x="17" y="16.500" width=".9" height="6.500"/></g><ellipse cx="5" cy="19.500" rx="1.400" ry="1.100" fill="#a8872c"/><circle cx="5.300" cy="17" r=".8" fill="#4a2818"/><rect x="0" y="20" width="3" height="1" fill="#d9d9d9"/></g></svg><div class="c" style="left:126px">SP000062</div><div class="c" style="left:292px;top:10px">Bình hoa khung kim loại</div><div class="c" style="left:292px;top:30px">- Khung kim loại (Chiếc)</div><div class="c r" style="right:728px">57,000</div><div class="c r" style="right:588px">50,000</div><div class="c r" style="right:448px">73</div><div class="c r" style="right:308px">0</div><div class="c" style="left:1042px;letter-spacing:.14px">30/09/2025 11:38</div><div class="c" style="left:1202px;letter-spacing:1.500px">---</div></div>
<div class="row" style="top:392px;height:61px"><div class="cb" style="top:15.500px"></div><svg class="a" style="left:42.8px;top:13.6px" width="16.4" height="14.58" viewBox="0 0 576 512"><path fill="#56616f" d="M528.100 171.500L382 150.200 316.700 17.800c-11.700-23.600-45.600-23.900-57.400 0L194 150.200 47.900 171.500c-26.200 3.800-36.700 36.100-17.700 54.600l105.700 103-25 145.500c-4.500 26.300 23.200 46 46.400 33.700L288 439.600l130.700 68.700c23.200 12.200 50.900-7.400 46.400-33.700l-25-145.500 105.700-103c19-18.500 8.500-50.800-17.700-54.600zM388.600 312.300l23.700 138.400L288 385.400l-124.300 65.300 23.700-138.400-100.600-98 139-20.200 62.200-126 62.200 126 139 20.200-100.600 98z"/></svg><svg class="th" viewBox="0 0 24 24" width="24" height="24"><g filter="url(#tb)"><rect x="2" y="2" width="20" height="20" fill="#bcc2cc"/><rect x="2" y="2" width="6.800" height="10" fill="#c9c5b8"/><rect x="4.300" y="2" width="1.500" height="9" fill="#cfd1d3"/><rect x="2" y="13" width="4" height="5" fill="#a9adb5"/><g fill="#d7d9d9"><circle cx="8" cy="16" r="2"/><circle cx="12" cy="17.500" r="1.700"/><circle cx="16.500" cy="16" r="1.700"/><circle cx="14" cy="11" r="1.300"/></g><circle cx="7" cy="9.800" r=".9" fill="#a2202c"/><circle cx="8" cy="9" r=".8" fill="#d0621c"/><circle cx="8.600" cy="10" r=".7" fill="#d4a428"/><rect x="7.300" y="10.800" width="1.200" height="3.200" fill="#4a3c14"/><circle cx="11.800" cy="12" r=".9" fill="#d78a20"/><circle cx="12.800" cy="13" r=".8" fill="#c4501a"/><circle cx="11" cy="12.500" r=".7" fill="#28201c"/><circle cx="16.800" cy="8" r=".7" fill="#7f8448"/><circle cx="17" cy="10" r=".7" fill="#6f7a40"/><circle cx="16.500" cy="12" r="1" fill="#c9b078"/><circle cx="10.800" cy="6" r=".5" fill="#8a8088"/><circle cx="12.800" cy="7" r=".5" fill="#8a8088"/><circle cx="12.700" cy="10" r=".5" fill="#807480"/><circle cx="14.800" cy="17" r=".6" fill="#7a8048"/></g></svg><div class="c" style="left:126px">SP000061</div><div class="c" style="left:292px;top:10px">Bình hoa dáng thấp</div><div class="c" style="left:292px;top:30px">(Chiếc)</div><div class="c r" style="right:728px">270,000</div><div class="c r" style="right:588px">203,050.83</div><div class="c r" style="right:448px">104</div><div class="c r" style="right:308px">0</div><div class="c" style="left:1042px;letter-spacing:.14px">30/09/2025 11:38</div><div class="c" style="left:1202px;letter-spacing:1.500px">---</div></div>
<div class="row" style="top:453px;height:61px"><div class="cb" style="top:15.500px"></div><svg class="a" style="left:42.8px;top:13.6px" width="16.4" height="14.58" viewBox="0 0 576 512"><path fill="#56616f" d="M528.100 171.500L382 150.200 316.700 17.800c-11.700-23.600-45.600-23.900-57.400 0L194 150.200 47.900 171.500c-26.200 3.800-36.700 36.100-17.700 54.600l105.700 103-25 145.500c-4.500 26.300 23.200 46 46.400 33.700L288 439.600l130.700 68.700c23.200 12.200 50.900-7.400 46.400-33.700l-25-145.500 105.700-103c19-18.500 8.500-50.800-17.700-54.600zM388.600 312.300l23.700 138.400L288 385.400l-124.300 65.300 23.700-138.400-100.600-98 139-20.200 62.200-126 62.200 126 139 20.200-100.600 98z"/></svg><svg class="th" viewBox="0 0 24 24" width="24" height="24"><g filter="url(#tb)"><rect width="24" height="24" fill="#8c7a5f"/><rect y="9.500" width="24" height="2" fill="#7a694d"/><rect y="11.500" width="24" height="12.500" fill="#8f7d5c"/><rect y="19.500" width="24" height="4.500" fill="#86714c"/><path fill="#c9cacd" d="M8.800 3.600c2-.8 4.700-.8 6.500 0 2.200 4.600 2 12.500-.8 17.200-1.500.5-3.400.5-4.800 0-2.800-4.700-3-12.600-.9-17.200z"/><path fill="#b9babe" d="M13 4c1 4 1 12-.5 17 .8 0 1.500-.1 2-.2 2.800-4.700 3-12.600.8-17.200-.7-.3-1.500-.5-2.300-.5z" opacity=".6"/></g></svg><div class="c" style="left:126px">(3) Mã hàng</div><div class="sub">SP000058...</div><div class="c" style="left:292px;top:10px">Bình hóa sứ Bát Tràng</div><div class="c r" style="right:728px">226,666.67</div><div class="c r" style="right:588px">120,000</div><div class="c r" style="right:448px">60</div><div class="c r" style="right:308px">0</div><div class="c" style="left:1042px;letter-spacing:.14px">30/09/2025 11:38</div><div class="c" style="left:1202px;letter-spacing:1.500px">---</div></div>
<div class="row" style="top:514px;height:45px"><div class="cb" style="top:15.500px"></div><svg class="a" style="left:42.8px;top:13.6px" width="16.4" height="14.58" viewBox="0 0 576 512"><path fill="#56616f" d="M528.100 171.500L382 150.200 316.700 17.800c-11.700-23.600-45.600-23.900-57.400 0L194 150.200 47.900 171.500c-26.200 3.800-36.700 36.100-17.700 54.600l105.700 103-25 145.500c-4.500 26.300 23.200 46 46.400 33.700L288 439.600l130.700 68.700c23.200 12.200 50.900-7.400 46.400-33.700l-25-145.500 105.700-103c19-18.500 8.500-50.800-17.700-54.600zM388.600 312.300l23.700 138.400L288 385.400l-124.300 65.300 23.700-138.400-100.600-98 139-20.200 62.200-126 62.200 126 139 20.200-100.600 98z"/></svg><svg class="th" viewBox="0 0 24 24" width="24" height="24"><g filter="url(#tb)"><rect width="24" height="24" fill="#2c2420"/><rect x="0" y="0" width="8.500" height="8.500" fill="#b8a9bc"/><rect x="16" y="0" width="8" height="3" fill="#a693aa"/><rect x="18" y="2.500" width="6" height="8" fill="#16120f"/><rect x="0" y="10.500" width="24" height="4.500" fill="#5b3a20"/><rect x="0" y="15" width="9" height="9" fill="#120c0a"/><rect x="9" y="15" width="11" height="7.500" fill="#b89060"/><rect x="20" y="15" width="4" height="8" fill="#15506a"/><g fill="#d9647c"><circle cx="8" cy="4" r="1"/><circle cx="10" cy="2.500" r="1"/><circle cx="7" cy="7.500" r="1.100"/><circle cx="9.500" cy="6.500" r="1"/><circle cx="12" cy="5.500" r="1"/><circle cx="14.500" cy="3.500" r=".9"/><circle cx="4.500" cy="8" r=".9"/><circle cx="19.500" cy="10" r=".8"/><circle cx="13" cy="8.500" r=".8"/></g><g fill="#3cb3a8"><circle cx="13.500" cy="2.500" r=".9"/><circle cx="16" cy="5" r="1"/><circle cx="18" cy="3.500" r=".9"/><circle cx="20.500" cy="6.500" r="1.100"/><circle cx="15" cy="8" r="1"/><circle cx="11" cy="9.500" r="1"/><circle cx="17.500" cy="9" r="1"/><circle cx="7.500" cy="10" r=".9"/><circle cx="22" cy="8" r=".8"/></g><g fill="#1a1236"><circle cx="11.500" cy="4" r=".8"/><circle cx="15.500" cy="6.500" r=".8"/><circle cx="9" cy="8.500" r=".7"/><circle cx="13.500" cy="6.800" r=".7"/><circle cx="18.500" cy="6.800" r=".7"/></g><g fill="#c9c27a"><circle cx="12" cy="1.200" r=".8"/><circle cx="14.500" cy="1.200" r=".8"/><circle cx="2" cy="11" r=".8"/><circle cx="6" cy="18.500" r="1.200"/></g><circle cx="10.800" cy="12.500" r=".9" fill="#8f94d9"/><g fill="#d9dbd9"><circle cx="2" cy="22.500" r=".9"/><circle cx="6.500" cy="22" r=".8"/><circle cx="10" cy="22.800" r=".9"/><circle cx="16" cy="22.300" r=".9"/><circle cx="1" cy="19" r=".6"/></g><g fill="#2c8c98"><circle cx="14" cy="22.500" r="1.100"/><circle cx="17.800" cy="22.800" r=".8"/></g></g></svg><div class="c" style="left:126px">SP000056</div><div class="c" style="left:292px;top:10px">Cỏ đá quý (Bông)</div><div class="c r" style="right:728px">15,000</div><div class="c r" style="right:588px">10,000</div><div class="c r" style="right:448px">16</div><div class="c r" style="right:308px">0</div><div class="c" style="left:1042px;letter-spacing:.14px">30/09/2025 11:38</div><div class="c" style="left:1202px;letter-spacing:1.500px">---</div></div>
<div class="row" style="top:559px;height:45px"><div class="cb" style="top:15.500px"></div><svg class="a" style="left:42.8px;top:13.6px" width="16.4" height="14.58" viewBox="0 0 576 512"><path fill="#56616f" d="M528.100 171.500L382 150.200 316.700 17.800c-11.700-23.600-45.600-23.900-57.400 0L194 150.200 47.900 171.500c-26.200 3.800-36.700 36.100-17.700 54.600l105.700 103-25 145.500c-4.500 26.300 23.200 46 46.400 33.700L288 439.600l130.700 68.700c23.200 12.200 50.900-7.400 46.400-33.700l-25-145.500 105.700-103c19-18.500 8.500-50.800-17.700-54.600zM388.600 312.300l23.700 138.400L288 385.400l-124.300 65.300 23.700-138.400-100.600-98 139-20.200 62.200-126 62.200 126 139 20.200-100.600 98z"/></svg><svg class="th" viewBox="0 0 24 24" width="24" height="24"><g filter="url(#tb)"><rect width="24" height="24" fill="#cfcfcf"/><rect x="0" y="1" width="5.500" height="4.500" fill="#b9a662"/><rect x="0" y="5.500" width="5.200" height="4.300" fill="#2a3020"/><rect x="0" y="10.800" width="6.500" height="1" fill="#8c5a24"/><rect x="5.500" y="1" width="1.300" height="6" fill="#7a7488"/><path fill="#bdb8b2" d="M19.500 1h1v12h-1zM21.500 2h2.500v4h-2.500zM14 17l10-4v2l-8 3.500z"/><rect x="13" y="19" width="11" height=".7" fill="#a8a294"/><g fill="#e6c81e"><circle cx="8" cy="2.500" r="1.200"/><circle cx="10" cy="3.500" r="1.300"/><circle cx="12" cy="2" r="1.100"/><circle cx="15.200" cy="1.200" r="1"/><circle cx="17.500" cy="4" r="1.100"/><circle cx="9" cy="6" r="1.500"/><circle cx="11.500" cy="6.500" r="1.800"/><circle cx="14" cy="5.500" r="1.500"/><circle cx="15.500" cy="7.800" r="1.400"/><circle cx="7.500" cy="8.500" r="1.300"/><circle cx="10" cy="9.500" r="1.800"/><circle cx="13" cy="9.500" r="1.800"/><circle cx="15" cy="11" r="1.300"/><circle cx="11" cy="12" r="1.600"/><circle cx="13" cy="13" r="1.300"/><circle cx="9" cy="11.500" r="1.100"/><circle cx="5.800" cy="4" r=".8"/></g><g fill="#8a9a24"><circle cx="11.500" cy="6.500" r=".6"/><circle cx="13.500" cy="10" r=".6"/><circle cx="10.300" cy="13" r=".6"/></g><path fill="#3c7a26" d="M11.500 15.500l1.800-1 .3 2.500-1.800.5z"/><rect x="10.300" y="17" width="2.500" height="5.800" rx=".6" fill="#1e2020"/><rect x="11.500" y="19.500" width="1" height="1.800" fill="#d9d9d9"/><path fill="#3a8a22" d="M2 15.500c1-1.300 3.500-1.300 4.200-.3l-1 1.300H3z"/><rect x="3.200" y="16.500" width="1.300" height="1.500" fill="#8c2a22"/><path fill="#151313" d="M0 18.800h6.500l.8 2.800H0z"/><rect x="3" y="22" width="17" height="1" fill="#a89e82"/></g></svg><div class="c" style="left:126px">SP000055</div><div class="c" style="left:292px;top:10px">Hoa phong lan nhảy</div><div class="c r" style="right:728px">250,000</div><div class="c r" style="right:588px">180,000</div><div class="c r" style="right:448px">31</div><div class="c r" style="right:308px">0</div><div class="c" style="left:1042px;letter-spacing:.14px">30/09/2025 11:38</div><div class="c" style="left:1202px;letter-spacing:1.500px">---</div></div>
<div class="row" style="top:604px;height:45px"><div class="cb" style="top:15.500px"></div><svg class="a" style="left:42.8px;top:13.6px" width="16.4" height="14.58" viewBox="0 0 576 512"><path fill="#56616f" d="M528.100 171.500L382 150.200 316.700 17.800c-11.700-23.600-45.600-23.900-57.400 0L194 150.200 47.900 171.500c-26.200 3.800-36.700 36.100-17.700 54.600l105.700 103-25 145.500c-4.500 26.300 23.200 46 46.400 33.700L288 439.600l130.700 68.700c23.200 12.200 50.900-7.400 46.400-33.700l-25-145.500 105.700-103c19-18.500 8.500-50.800-17.700-54.600zM388.600 312.300l23.700 138.400L288 385.400l-124.300 65.300 23.700-138.400-100.600-98 139-20.200 62.200-126 62.200 126 139 20.200-100.600 98z"/></svg><svg class="th" viewBox="0 0 24 24" width="24" height="24"><g filter="url(#tb)"><rect width="24" height="24" fill="#c9c9c9"/><path fill="#d3d3d5" d="M13 0h11v24H14z"/><path fill="#7a6440" d="M0 4.500L9.500 0h1.500L0 7z"/><path fill="#3c3c4a" d="M0 2.500L3.500 0H5L0 4z"/><path fill="#bcb4c8" d="M0 8l5 3 3 9-4 4H0z"/><path fill="#2a1c1c" d="M0 14.500l1.500-.5.500 2-2 1zM.5 19.500L4 16.800l.8 1L1 21z"/><rect x="3.500" y="21" width="1.500" height=".8" fill="#3a7ac8"/><circle cx="22" cy="8" r="1.300" fill="#a89a98"/><path fill="#dcb93c" d="M12 .8c.6 1.200.8 2 .8 3 .6-1 1.300-1.600 2.200-1.900 0 1.300 0 2 .2 2.800.8-.8 1.700-1.200 2.700-1.200-.3 1-.3 1.700-.2 2.400.8-.5 1.500-.7 2.300-.6-1.200 3-3 6.500-5.500 10.800l-1.200 6.600h-1.600l-.3-6.600C8.800 12 6.500 8.800 4 6.800c1-.3 1.800-.2 2.600.2-.2-1-.2-1.800.2-2.700 1 .3 1.700.8 2.300 1.500 0-1.200.3-2.300 1-3.200.6.500 1 1 1.300 1.700 0-1.300.2-2.400.6-3.500z"/><path stroke="#cfa828" stroke-width=".5" fill="none" d="M12 4v12M9 7l3 9M15.500 6.500L12.500 16M6.500 8l5 8"/></g></svg><div class="c" style="left:126px">SP000054</div><div class="c" style="left:292px;top:10px">Hoa Yến Mạch (Bó)</div><div class="c r" style="right:728px">170,000</div><div class="c r" style="right:588px">100,000</div><div class="c r" style="right:448px">40</div><div class="c r" style="right:308px">0</div><div class="c" style="left:1042px;letter-spacing:.14px">30/09/2025 11:38</div><div class="c" style="left:1202px">445 ngày</div></div>
<div class="row" style="top:649px;height:61px"><div class="cb" style="top:15.500px"></div><svg class="a" style="left:42.8px;top:13.6px" width="16.4" height="14.58" viewBox="0 0 576 512"><path fill="#56616f" d="M528.100 171.500L382 150.200 316.700 17.800c-11.700-23.600-45.600-23.900-57.400 0L194 150.200 47.900 171.500c-26.200 3.800-36.700 36.100-17.700 54.600l105.700 103-25 145.500c-4.500 26.300 23.200 46 46.400 33.700L288 439.600l130.700 68.700c23.200 12.200 50.900-7.400 46.400-33.700l-25-145.500 105.700-103c19-18.500 8.500-50.800-17.700-54.600zM388.600 312.300l23.700 138.400L288 385.400l-124.300 65.300 23.700-138.400-100.600-98 139-20.200 62.200-126 62.200 126 139 20.200-100.600 98z"/></svg><svg class="th" viewBox="0 0 24 24" width="24" height="24"><g filter="url(#tb)"><rect width="24" height="24" fill="#c3c3c8"/><path fill="#96949a" d="M0 17.500l9-1.500 5 8H0z"/><path fill="#a85a2c" d="M0 15.200c2-.5 4-.3 5.500.5l-.5 2-5 1z"/><ellipse cx="9" cy="3.300" rx="1.200" ry=".7" fill="#17404c"/><path fill="#d9d9dc" d="M7 5h5l-1 3H8z" opacity=".6"/><g><circle cx="6.800" cy="9.500" r="1.600" fill="#c99a9a"/><circle cx="8" cy="11.500" r="1.500" fill="#c9b25a"/><circle cx="9" cy="8.500" r="1.600" fill="#a8a84a"/><circle cx="10.500" cy="10" r="2" fill="#4c9444"/><circle cx="12.500" cy="8" r="1.800" fill="#3f98a0"/><circle cx="14" cy="10" r="1.700" fill="#5a9cb8"/><circle cx="15.800" cy="8.300" r="1.300" fill="#9a9cae"/><circle cx="12.500" cy="11.500" r="1.500" fill="#4a90a8"/><circle cx="9.500" cy="12" r="1.200" fill="#6a8a3a"/></g><path fill="#dcdcde" d="M4.800 13.800l4-1.500 6.500.5-2.500 3.700-5.500.3z"/><path fill="#5a6a7c" d="M8.300 16.800l5.500-.3 1 1.500-3.800-.2 1 4.700-1.500.2-.7-4.400-2.800 4.200-1.300-.8z"/></g></svg><div class="c" style="left:126px">SP000053</div><div class="c" style="left:292px;top:10px">Baby màu cầu vồng</div><div class="c" style="left:292px;top:30px">(Bó)</div><div class="c r" style="right:728px">650,000</div><div class="c r" style="right:588px">570,000</div><div class="c r" style="right:448px">17</div><div class="c r" style="right:308px">0</div><div class="c" style="left:1042px;letter-spacing:.14px">30/09/2025 11:38</div><div class="c" style="left:1202px;letter-spacing:1.500px">---</div></div>
<div class="row" style="top:710px;height:61px"><div class="cb" style="top:15.500px"></div><svg class="a" style="left:42.8px;top:13.6px" width="16.4" height="14.58" viewBox="0 0 576 512"><path fill="#56616f" d="M528.100 171.500L382 150.200 316.700 17.800c-11.700-23.600-45.600-23.900-57.400 0L194 150.200 47.900 171.500c-26.200 3.800-36.700 36.100-17.700 54.600l105.700 103-25 145.500c-4.500 26.300 23.200 46 46.400 33.700L288 439.600l130.700 68.700c23.200 12.200 50.900-7.400 46.400-33.700l-25-145.500 105.700-103c19-18.500 8.500-50.800-17.700-54.600zM388.600 312.300l23.700 138.400L288 385.400l-124.300 65.300 23.700-138.400-100.600-98 139-20.200 62.200-126 62.200 126 139 20.200-100.600 98z"/></svg><svg class="th" viewBox="0 0 24 24" width="24" height="24"><g filter="url(#tb)"><rect width="24" height="24" fill="#6e6458"/><rect y="15.500" width="24" height="7" fill="#cbc6c0"/><rect x="0" y="0" width="4" height="16.500" fill="#3c2a1e"/><rect x="19" y="0" width="5" height="15.500" fill="#33241a"/><rect x="0" y="6.200" width="9" height="3.800" fill="#736a60"/><rect x="3" y="13" width="6" height="3.500" fill="#857b6a"/><rect x="15" y="11" width="7" height="2.500" fill="#8a7a5e"/><rect x="15" y="8" width="4" height="3" fill="#c9ccc8"/><g fill="#cfc5ae"><circle cx="5" cy="2.500" r="2.200"/><circle cx="8.500" cy="2" r="2.400"/><circle cx="12" cy="2.500" r="2.500"/><circle cx="15.500" cy="2.500" r="2.400"/><circle cx="18" cy="4" r="2"/><circle cx="7" cy="5" r="2"/><circle cx="10.500" cy="5.500" r="2.300"/><circle cx="14" cy="6" r="2.300"/><circle cx="16.500" cy="7" r="1.700"/></g><g fill="#c2a878"><circle cx="11" cy="7.500" r="1.800"/><circle cx="13" cy="9" r="1.500"/></g><g fill="#e9e9e6"><circle cx="8.500" cy="7.500" r="1"/><circle cx="6.800" cy="9.500" r=".8"/><circle cx="8.800" cy="9.800" r=".7"/><circle cx="19.300" cy="4.500" r=".7"/><circle cx="19.300" cy="8.500" r=".7"/></g><path fill="#a87434" d="M9.500 10.500h4.500c.8 3 .8 6.500-.5 9.500h-3.500c-1.300-3-1.300-6.500-.5-9.500z"/><g fill="#4a2c14"><circle cx="11" cy="13" r=".9"/><circle cx="12.800" cy="15" r=".9"/><circle cx="11" cy="17" r=".9"/><circle cx="12.800" cy="18.800" r=".8"/></g><g fill="#d8b47a"><circle cx="12.800" cy="12.500" r=".8"/><circle cx="11" cy="15" r=".8"/><circle cx="12.800" cy="17" r=".8"/></g><rect x="14" y="19.300" width="4" height="1.300" rx=".4" fill="#16120f"/><rect x="5" y="19.500" width="3.500" height=".9" fill="#6a6a8a"/><rect y="22.500" width="24" height="1.500" fill="#7c7258"/><rect x="17.500" y="23" width="3.500" height="1" fill="#1a1612"/></g></svg><div class="c" style="left:126px">SP000052</div><div class="c" style="left:292px;top:10px">Baby star ướp trắng</div><div class="c" style="left:292px;top:30px">(Bó)</div><div class="c r" style="right:728px">1,200,000</div><div class="c r" style="right:588px">1,000,000</div><div class="c r" style="right:448px">17</div><div class="c r" style="right:308px">0</div><div class="c" style="left:1042px;letter-spacing:.14px">30/09/2025 11:38</div><div class="c" style="left:1202px;letter-spacing:1.500px">---</div></div>
<div class="row" style="top:771px;height:20px"></div>
<div class="a" style="left:0;top:781px;width:1307.500px;height:8px;background:#9498a0;border-radius:4px"></div>
</div>
<div class="a" style="left:1271px;top:101px;width:125px;height:48px;background:#ffffff"></div>
<div class="a" style="left:1276px;top:110px;width:114px;height:32px;border:1.500px solid #0a52cc;border-radius:8px;background:linear-gradient(180deg,#e4edfb,#dde8f8)"></div>
<svg class="a" style="left:1289.500px;top:119.500px" width="13" height="13" viewBox="0 0 13 13" fill="none" stroke="#0a55d8" stroke-width="1.500" stroke-linecap="round"><path d="M6.500 .8v11.400M.8 6.500h11.400"/></svg>
<div class="a" style="left:1309.500px;top:110px;line-height:32px;font-size:15px;letter-spacing:-0.35px;color:#0a4fd6;-webkit-text-stroke:.3px #0a4fd6;white-space:nowrap">Tạo mới</div>
<svg class="a" style="left:1368.500px;top:122.500px" width="9" height="6" viewBox="0 0 9 6" fill="none" stroke="#0a55d8" stroke-width="1.600" stroke-linecap="round" stroke-linejoin="round"><path d="M1.200 1l3.300 3.300L7.800 1"/></svg>
<div id="dd"><div class="a" style="left:.5px;top:82px;width:247px;height:43px;background:#ffffff"></div><div class="di" style="top:6.8px;">Hàng hóa</div><div class="di" style="top:45.8px;">Dịch vụ</div><div class="di" style="top:84.8px;color:#30343a;">Combo - đóng gói</div><div class="di" style="top:123.8px;">Hàng sản xuất</div></div>
<div class="a" style="left:1389px;top:141px;width:7px;height:8px;background:linear-gradient(90deg,#e4e4e4,#f6f6f6)"></div><div class="a" style="left:1271px;top:142.500px;width:118.500px;height:6.500px;background:#fdfdfd;border-top-right-radius:8px;box-shadow:0 -1px 1.500px rgba(0,0,0,.06)"></div>
<div class="a" style="left:1782px;top:907px;width:120px;height:32px;border-radius:8px;background:#0040c8"></div>
<svg class="a" style="left:1794px;top:915.500px" width="17.500" height="15.660" viewBox="0 0 19 17" fill="none" stroke="#dde0e8" stroke-width="1.900" stroke-linecap="round" stroke-linejoin="round"><path d="M10 1.500c4.200 0 7.500 2.600 7.500 6s-3.300 6-7.500 6c-1 0-2-.2-2.900-.5-1.200.9-2.700 1.500-4.600 1.700 1-.9 1.600-2 1.800-3.200C3.200 10.500 2.500 9.100 2.500 7.500c0-3.400 3.300-6 7.500-6z"/><circle cx="6.800" cy="7.600" r="1.050" fill="#dde0e8" stroke="none"/><circle cx="10" cy="7.600" r="1.050" fill="#dde0e8" stroke="none"/><circle cx="13.200" cy="7.600" r="1.050" fill="#dde0e8" stroke="none"/></svg>
<div class="a" style="left:1817.500px;top:912px;line-height:22px;font-weight:700;font-size:15px;color:#e0e3ea;white-space:nowrap">1900 6522</div>
</body>
</html>
